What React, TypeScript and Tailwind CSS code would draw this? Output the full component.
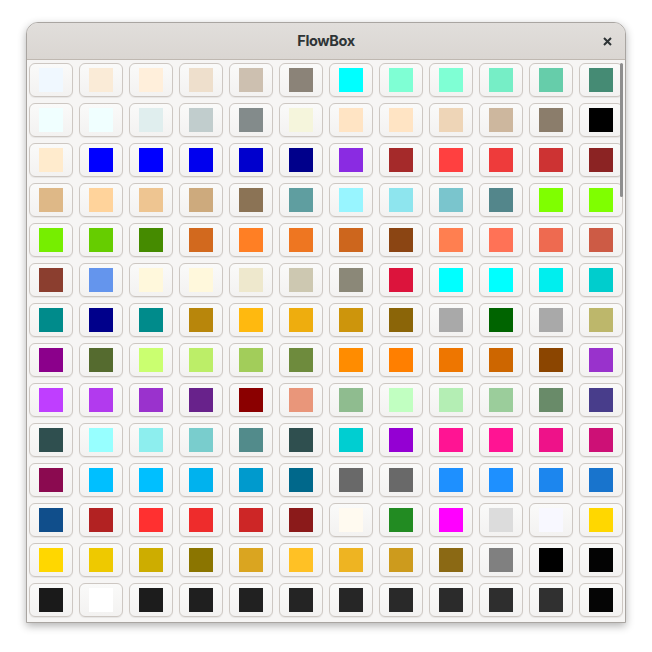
const colors = [
  '#F0F8FF', '#FAEBD7', '#FFEFDB', '#EEDFCC', '#CDC0B0', '#8B8378', '#00FFFF', '#7FFFD4', '#7FFFD4', '#76EEC6', '#66CDAA', '#458B74',
  '#F0FFFF', '#F0FFFF', '#E0EEEE', '#C1CDCD', '#838B8B', '#F5F5DC', '#FFE4C4', '#FFE4C4', '#EED5B7', '#CDB79E', '#8B7D6B', '#000000',
  '#FFEBCD', '#0000FF', '#0000FF', '#0000EE', '#0000CD', '#00008B', '#8A2BE2', '#A52A2A', '#FF4040', '#EE3B3B', '#CD3333', '#8B2323',
  '#DEB887', '#FFD39B', '#EEC591', '#CDAA7D', '#8B7355', '#5F9EA0', '#98F5FF', '#8EE5EE', '#7AC5CD', '#53868B', '#7FFF00', '#7FFF00',
  '#76EE00', '#66CD00', '#458B00', '#D2691E', '#FF7F24', '#EE7621', '#CD661D', '#8B4513', '#FF7F50', '#FF7256', '#EE6A50', '#CD5B45',
  '#8B3E2F', '#6495ED', '#FFF8DC', '#FFF8DC', '#EEE8CD', '#CDC8B1', '#8B8878', '#DC143C', '#00FFFF', '#00FFFF', '#00EEEE', '#00CDCD',
  '#008B8B', '#00008B', '#008B8B', '#B8860B', '#FFB90F', '#EEAD0E', '#CD950C', '#8B6508', '#A9A9A9', '#006400', '#A9A9A9', '#BDB76B',
  '#8B008B', '#556B2F', '#CAFF70', '#BCEE68', '#A2CD5A', '#6E8B3D', '#FF8C00', '#FF7F00', '#EE7600', '#CD6600', '#8B4500', '#9932CC',
  '#BF3EFF', '#B23AEE', '#9A32CD', '#68228B', '#8B0000', '#E9967A', '#8FBC8F', '#C1FFC1', '#B4EEB4', '#9BCD9B', '#698B69', '#483D8B',
  '#2F4F4F', '#97FFFF', '#8DEEEE', '#79CDCD', '#528B8B', '#2F4F4F', '#00CED1', '#9400D3', '#FF1493', '#FF1493', '#EE1289', '#CD1076',
  '#8B0A50', '#00BFFF', '#00BFFF', '#00B2EE', '#009ACD', '#00688B', '#696969', '#696969', '#1E90FF', '#1E90FF', '#1C86EE', '#1874CD',
  '#104E8B', '#B22222', '#FF3030', '#EE2C2C', '#CD2626', '#8B1A1A', '#FFFAF0', '#228B22', '#FF00FF', '#DCDCDC', '#F8F8FF', '#FFD700',
  '#FFD700', '#EEC900', '#CDAD00', '#8B7500', '#DAA520', '#FFC125', '#EEB422', '#CD9B1D', '#8B6914', '#808080', '#000000', '#030303',
  '#1A1A1A', '#FFFFFF', '#1C1C1C', '#1F1F1F', '#212121', '#242424', '#262626', '#292929', '#2B2B2B', '#2E2E2E', '#303030', '#050505',
];

const Swatch = ({ color }: { color: string }) => (
  <div className="w-[44px] h-[34px] rounded-[6px] border border-[#cdc7c2] bg-gradient-to-b from-[#fafaf9] to-[#f3f2f1] shadow-[0_1px_1px_rgba(0,0,0,0.07)] flex items-center justify-center">
    {/* colour comes from data */}
    <div className="w-[24px] h-[24px]" style={{ backgroundColor: color }} />
  </div>
);

const App = () => {
  return (
    <div
      className="w-[652px] h-[652px] bg-white pl-[26px] pt-[22px]"
      style={{ fontFamily: 'Inter, "Noto Sans", sans-serif' }}
    >
      <div className="w-[600px] h-[601px] rounded-t-[12px] border border-[#a9a5a1] bg-[#f6f5f4] shadow-[0_3px_9px_rgba(0,0,0,0.3)] overflow-hidden flex flex-col">
        {/* Header bar */}
        <div className="h-[37px] shrink-0 bg-gradient-to-b from-[#e1dedb] to-[#dad6d2] border-b border-[#bfb8b1] flex items-center justify-center relative">
          <span className="text-[14.5px] font-bold text-[#2e3436] tracking-tight">FlowBox</span>
          <svg
            className="absolute right-[13px] top-[14px]"
            width="9"
            height="9"
            viewBox="0 0 9 9"
            fill="none"
            stroke="#2e3436"
            strokeWidth="2"
          >
            <path d="M1 1 L8 8 M8 1 L1 8" />
          </svg>
        </div>

        {/* Flow box */}
        <div className="relative flex-1 overflow-hidden">
          <div className="grid grid-cols-[repeat(12,44px)] gap-[6px] pl-[2px] pt-[3px]">
            {colors.map((c, i) => (
              <Swatch key={i} color={c} />
            ))}
          </div>
          <div className="absolute right-[2px] top-[3px] w-[3px] h-[134px] rounded-full bg-[#8e8e8e]" />
        </div>
      </div>
    </div>
  );
};

export default App;
